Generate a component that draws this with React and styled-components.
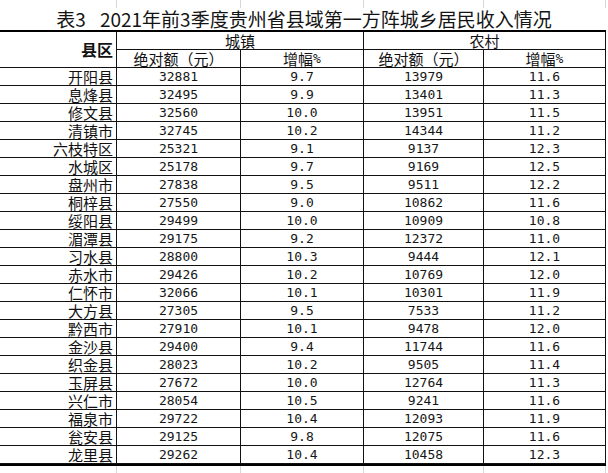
import React from "react";
import styled, { createGlobalStyle } from "styled-components";

const rows = [
  ["开阳县", "32881", "9.7", "13979", "11.6"],
  ["息烽县", "32495", "9.9", "13401", "11.3"],
  ["修文县", "32560", "10.0", "13951", "11.5"],
  ["清镇市", "32745", "10.2", "14344", "11.2"],
  ["六枝特区", "25321", "9.1", "9137", "12.3"],
  ["水城区", "25178", "9.7", "9169", "12.5"],
  ["盘州市", "27838", "9.5", "9511", "12.2"],
  ["桐梓县", "27550", "9.0", "10862", "11.6"],
  ["绥阳县", "29499", "10.0", "10909", "10.8"],
  ["湄潭县", "29175", "9.2", "12372", "11.0"],
  ["习水县", "28800", "10.3", "9444", "12.1"],
  ["赤水市", "29426", "10.2", "10769", "12.0"],
  ["仁怀市", "32066", "10.1", "10301", "11.9"],
  ["大方县", "27305", "9.5", "7533", "11.2"],
  ["黔西市", "27910", "10.1", "9478", "12.0"],
  ["金沙县", "29400", "9.4", "11744", "11.6"],
  ["织金县", "28023", "10.2", "9505", "11.4"],
  ["玉屏县", "27672", "10.0", "12764", "11.3"],
  ["兴仁市", "28054", "10.5", "9241", "11.6"],
  ["福泉市", "29722", "10.4", "12093", "11.9"],
  ["瓮安县", "29125", "9.8", "12075", "11.6"],
  ["龙里县", "29262", "10.4", "10458", "12.3"],
];

// column widths incl. the right border line
const COLS = "117px 124px 123px 120px 122px";

const GlobalStyle = createGlobalStyle`
  html, body {
    margin: 0;
    padding: 0;
    background: #fff;
  }
  body {
    font-family: "Noto Sans CJK SC", "Noto Sans", sans-serif;
    color: #111;
  }
`;

const Sheet = styled.div`
  width: 608px;
  height: 473px;
  overflow: hidden;
  background: #fff;
  display: flex;
  flex-direction: column;
`;

const GridStrip = styled.div`
  display: grid;
  grid-template-columns: ${COLS};
  height: ${(p) => p.h}px;
  flex: none;
`;

const GridCell = styled.div`
  border-right: 1px solid #d6d6d6;
`;

const Title = styled.div`
  height: 22px;
  line-height: 22px;
  width: 608px;
  text-align: center;
  font-size: 19px;
  white-space: nowrap;
  color: #141414;
  flex: none;
`;

const TitleGap = styled.span`
  display: inline-block;
  width: 14px;
`;

const Table = styled.div`
  display: grid;
  grid-template-columns: ${COLS};
  grid-auto-rows: 18px;
  border-top: 2px solid #000;
  border-bottom: 2px solid #000;
  width: 606px;
  flex: none;
`;

const Cell = styled.div`
  box-sizing: border-box;
  border-right: 1px solid #111;
  border-bottom: 1px solid #111;
  display: flex;
  align-items: center;
  justify-content: ${(p) => (p.right ? "flex-end" : "center")};
  padding-right: ${(p) => (p.right ? "3px" : "0")};
  font-size: 15px;
  line-height: 17px;
  white-space: nowrap;
  grid-column: ${(p) => p.col || "auto"};
  grid-row: ${(p) => p.row || "auto"};
`;

const HeadCell = styled(Cell)`
  font-weight: ${(p) => (p.bold ? 700 : 400)};
  font-size: ${(p) => (p.bold ? "16px" : "15px")};
`;

const Num = styled.span`
  font-family: "DejaVu Sans Mono", "Liberation Mono", monospace;
  font-size: 13px;
  line-height: 17px;
  color: #161616;
`;

export default function App() {
  const strip = (h) => (
    <GridStrip h={h}>
      {[0, 1, 2, 3, 4].map((i) => (
        <GridCell key={i} />
      ))}
    </GridStrip>
  );

  return (
    <>
      <GlobalStyle />
      <Sheet>
        {strip(8)}
        <Title>
          表3<TitleGap />2021年前3季度贵州省县域第一方阵城乡居民收入情况
        </Title>
        <Table>
          <HeadCell bold right row="1 / span 2" col="1">
            县区
          </HeadCell>
          <HeadCell col="2 / span 2">城镇</HeadCell>
          <HeadCell col="4 / span 2">农村</HeadCell>
          <HeadCell>绝对额（元）</HeadCell>
          <HeadCell>
            增幅<Num>%</Num>
          </HeadCell>
          <HeadCell>绝对额（元）</HeadCell>
          <HeadCell>
            增幅<Num>%</Num>
          </HeadCell>
          {rows.map((r) => (
            <React.Fragment key={r[0]}>
              <Cell right>{r[0]}</Cell>
              <Cell>
                <Num>{r[1]}</Num>
              </Cell>
              <Cell>
                <Num>{r[2]}</Num>
              </Cell>
              <Cell>
                <Num>{r[3]}</Num>
              </Cell>
              <Cell>
                <Num>{r[4]}</Num>
              </Cell>
            </React.Fragment>
          ))}
        </Table>
        {strip(8)}
      </Sheet>
    </>
  );
}
